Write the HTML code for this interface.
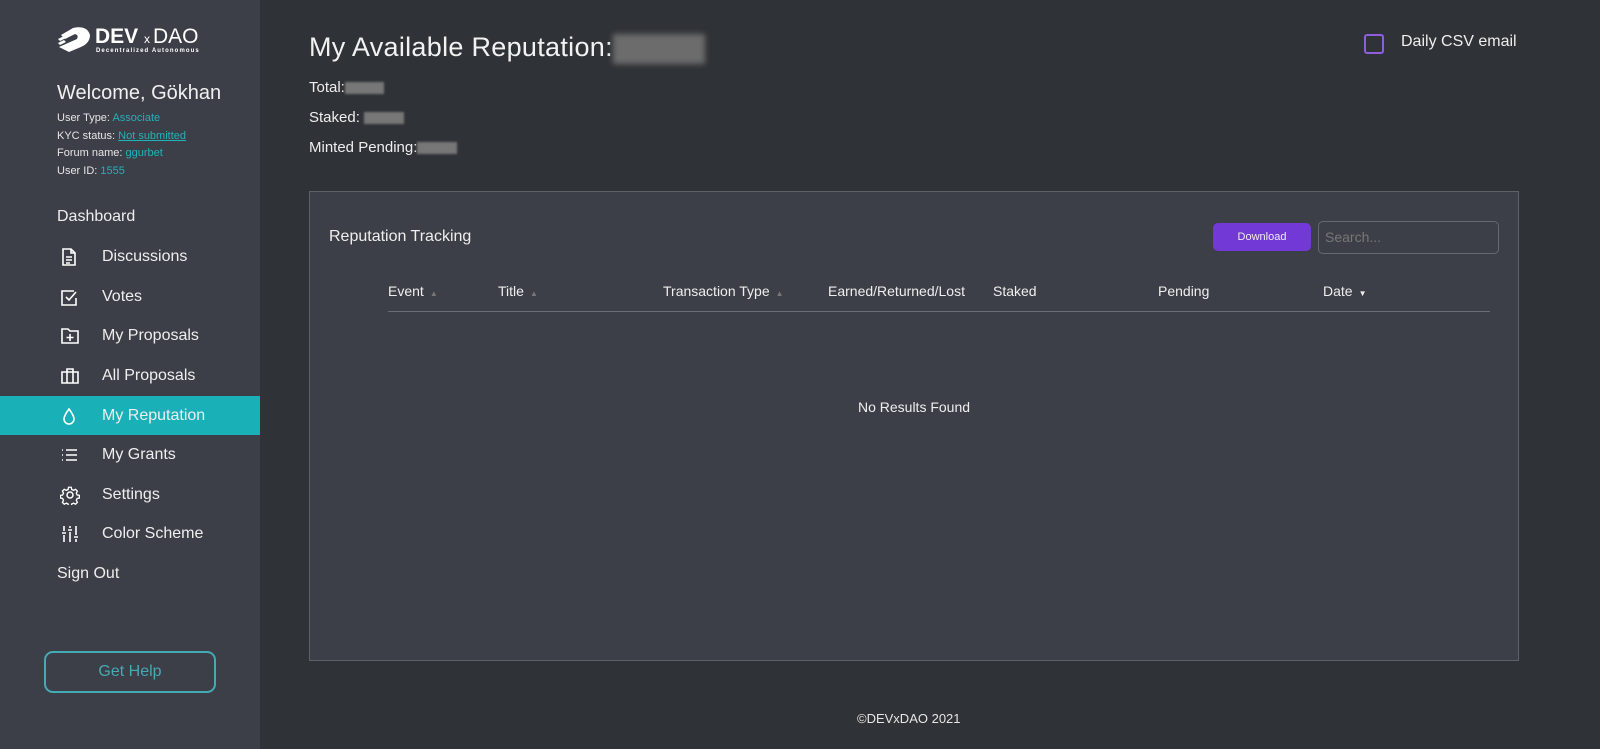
<!DOCTYPE html>
<html><head><meta charset="utf-8">
<style>
*{margin:0;padding:0;box-sizing:border-box}
html,body{width:1600px;height:749px;overflow:hidden;background:#2f3236;font-family:"Liberation Sans",sans-serif;color:#eee}
.side{position:absolute;left:0;top:0;width:260px;height:749px;background:#3c3f47}
.logo{position:absolute;left:57px;top:25px}
.welcome{position:absolute;left:57px;top:82px;font-size:20px;color:#f0f0f0}
.info{position:absolute;left:57px;top:110px;font-size:11px;line-height:17.7px;color:#e6e6e6}
.info span{color:#22b2b9}
.info u{color:#22b2b9;text-decoration-thickness:1px}
.nav{position:absolute;left:0;width:260px;height:39px;font-size:16px;color:#eee;line-height:39px}
.nav .t{position:absolute;left:102px}
.nav svg{position:absolute;left:60px;top:10px}
.nav.act{background:#1ab0b8}
.plain{position:absolute;left:57px;font-size:16px;color:#eee}
.help{position:absolute;left:44px;top:651px;width:172px;height:42px;border:2px solid #44aab4;border-radius:9px;color:#44aab4;font-size:16px;text-align:center;line-height:38px}
.h1{position:absolute;left:309px;top:32px;font-size:27px;color:#f2f2f2;letter-spacing:.3px}
.blur{display:inline-block;background:#777;vertical-align:middle;filter:blur(1px)}
.kv{position:absolute;left:309px;font-size:15px;color:#eee}
.chk{position:absolute;left:1364px;top:34px;width:20px;height:20px;border:2px solid #8d5fe0;border-radius:3px}
.csv{position:absolute;left:1401px;top:33px;font-size:16px;color:#eee}
.panel{position:absolute;left:309px;top:191px;width:1210px;height:470px;background:#3c3f47;border:1px solid #5e6168}
.pt{position:absolute;left:19px;top:36px;font-size:16px;color:#eee}
.dl{position:absolute;left:903px;top:31px;width:98px;height:28px;background:#7239d6;border-radius:5px;color:#eee;font-size:11px;text-align:center;line-height:28px}
.search{position:absolute;left:1008px;top:29px;width:181px;height:33px;border:1px solid #666a70;border-radius:5px;color:#777;font-size:14px;padding-left:6px;line-height:31px}
.th{position:absolute;top:91px;font-size:14px;color:#eee}
.th i{font-style:normal;font-size:8px;color:#777;margin-left:6px}
.line{position:absolute;left:78px;top:119px;width:1102px;height:1px;background:#6a6d73}
.nores{position:absolute;left:0;width:100%;top:207px;text-align:center;font-size:14px;color:#eee}
.foot{position:absolute;left:857px;top:711px;font-size:13px;color:#e6e6e6}
</style></head><body>
<div class="side">
 <div class="logo">
  <svg width="150" height="28" viewBox="0 0 150 28">
   <g fill="#fff">
    <path d="M4 10 L16 3 Q30 0 33 10 Q33 18 24 22 L12 27 L2 22 L20 14 Q22 10 18 9 L8 14 Z"/>
    <path d="M1 14 L7 11 L9 13 L3 16 Z"/>
    <path d="M1 18 L7 15 L9 17 L3 20 Z" />
   </g>
   <text x="38" y="18" font-family="Liberation Sans" font-weight="bold" font-size="21" fill="#fff">DEV</text>
   <text x="87" y="18" font-family="Liberation Sans" font-size="12" fill="#fff">x</text>
   <text x="96" y="18" font-family="Liberation Sans" font-size="21" fill="#fff">DAO</text>
   <text x="39" y="27" font-family="Liberation Sans" font-weight="bold" font-size="6" letter-spacing="1.1" fill="#fff">Decentralized Autonomous</text>
  </svg>
 </div>
 <div class="welcome">Welcome, Gökhan</div>
 <div class="info">User Type: <span>Associate</span><br>KYC status: <u>Not submitted</u><br>Forum name: <span>ggurbet</span><br>User ID: <span>1555</span></div>
 <div class="plain" style="top:208px">Dashboard</div>
 <div class="nav" style="top:237px"><svg width="18" height="20" viewBox="0 0 18 20" fill="none" stroke="#fff" stroke-width="1.6"><path d="M3 2h8l4 4v12H3z M11 2v4h4 M6 10h6 M6 13h6 M6 16h4"/></svg><span class="t">Discussions</span></div>
 <div class="nav" style="top:277px"><svg width="18" height="20" viewBox="0 0 18 20" fill="none" stroke="#fff" stroke-width="1.6"><path d="M14 4H2v14h14v-7 M6 10l3 3 7-8"/></svg><span class="t">Votes</span></div>
 <div class="nav" style="top:316px"><svg width="20" height="20" viewBox="0 0 20 20" fill="none" stroke="#fff" stroke-width="1.6"><path d="M2 3h6l2 2h8v12H2z M10 8v7 M6.5 11.5h7"/></svg><span class="t">My Proposals</span></div>
 <div class="nav" style="top:356px"><svg width="20" height="20" viewBox="0 0 20 20" fill="none" stroke="#fff" stroke-width="1.6"><path d="M2 6h16v11H2z M7 6V3h6v3 M7 6v11 M13 6v11"/></svg><span class="t">All Proposals</span></div>
 <div class="nav act" style="top:396px"><svg width="18" height="20" viewBox="0 0 18 20" fill="none" stroke="#fff" stroke-width="1.6"><path d="M9 3C6 7 4 10 4 13a5 5 0 0 0 10 0c0-3-2-6-5-10z"/></svg><span class="t">My Reputation</span></div>
 <div class="nav" style="top:435px"><svg width="18" height="20" viewBox="0 0 18 20" fill="none" stroke="#fff" stroke-width="1.6"><path d="M6 5h11 M6 10h11 M6 15h11 M2 5h1 M2 10h1 M2 15h1"/></svg><span class="t">My Grants</span></div>
 <div class="nav" style="top:475px"><svg width="20" height="20" viewBox="0 0 20 20" fill="none" stroke="#fff" stroke-width="1.5"><circle cx="10" cy="10" r="3"/><path d="M8.5 1.5h3l.5 2.5 2 1 2.3-1.2 2 2-1.2 2.3 1 2 2.4.4v3l-2.4.5-1 2 1.2 2.3-2 2-2.3-1.2-2 1-.5 2.4h-3l-.5-2.4-2-1-2.3 1.2-2-2 1.2-2.3-1-2-2.4-.5v-3l2.4-.4 1-2-1.2-2.3 2-2 2.3 1.2 2-1z" transform="scale(.9) translate(1 1)"/></svg><span class="t">Settings</span></div>
 <div class="nav" style="top:514px"><svg width="20" height="20" viewBox="0 0 20 20" fill="none" stroke="#fff" stroke-width="1.6"><path d="M4 2v5 M4 11v7 M2 9h4 M10 2v2 M10 8v10 M8 6h4 M16 2v9 M16 15v3 M14 13h4"/></svg><span class="t">Color Scheme</span></div>
 <div class="plain" style="top:565px">Sign Out</div>
 <div class="help">Get Help</div>
</div>

<div class="h1">My Available Reputation:<span class="blur" style="width:92px;height:30px;background:#6c6c6c;filter:blur(3px)"></span></div>
<div class="kv" style="top:79px">Total:<span class="blur" style="width:39px;height:12px"></span></div>
<div class="kv" style="top:109px">Staked: <span class="blur" style="width:40px;height:12px"></span></div>
<div class="kv" style="top:139px">Minted Pending:<span class="blur" style="width:40px;height:12px"></span></div>
<div class="chk"></div>
<div class="csv">Daily CSV email</div>

<div class="panel">
 <div class="pt">Reputation Tracking</div>
 <div class="dl">Download</div>
 <div class="search">Search...</div>
 <div class="th" style="left:78px">Event<i>▲</i></div>
 <div class="th" style="left:188px">Title<i>▲</i></div>
 <div class="th" style="left:353px">Transaction Type<i>▲</i></div>
 <div class="th" style="left:518px">Earned/Returned/Lost</div>
 <div class="th" style="left:683px">Staked</div>
 <div class="th" style="left:848px">Pending</div>
 <div class="th" style="left:1013px">Date<i style="color:#eee">▼</i></div>
 <div class="line"></div>
 <div class="nores">No Results Found</div>
</div>
<div class="foot">©DEVxDAO 2021</div>
</body></html>
